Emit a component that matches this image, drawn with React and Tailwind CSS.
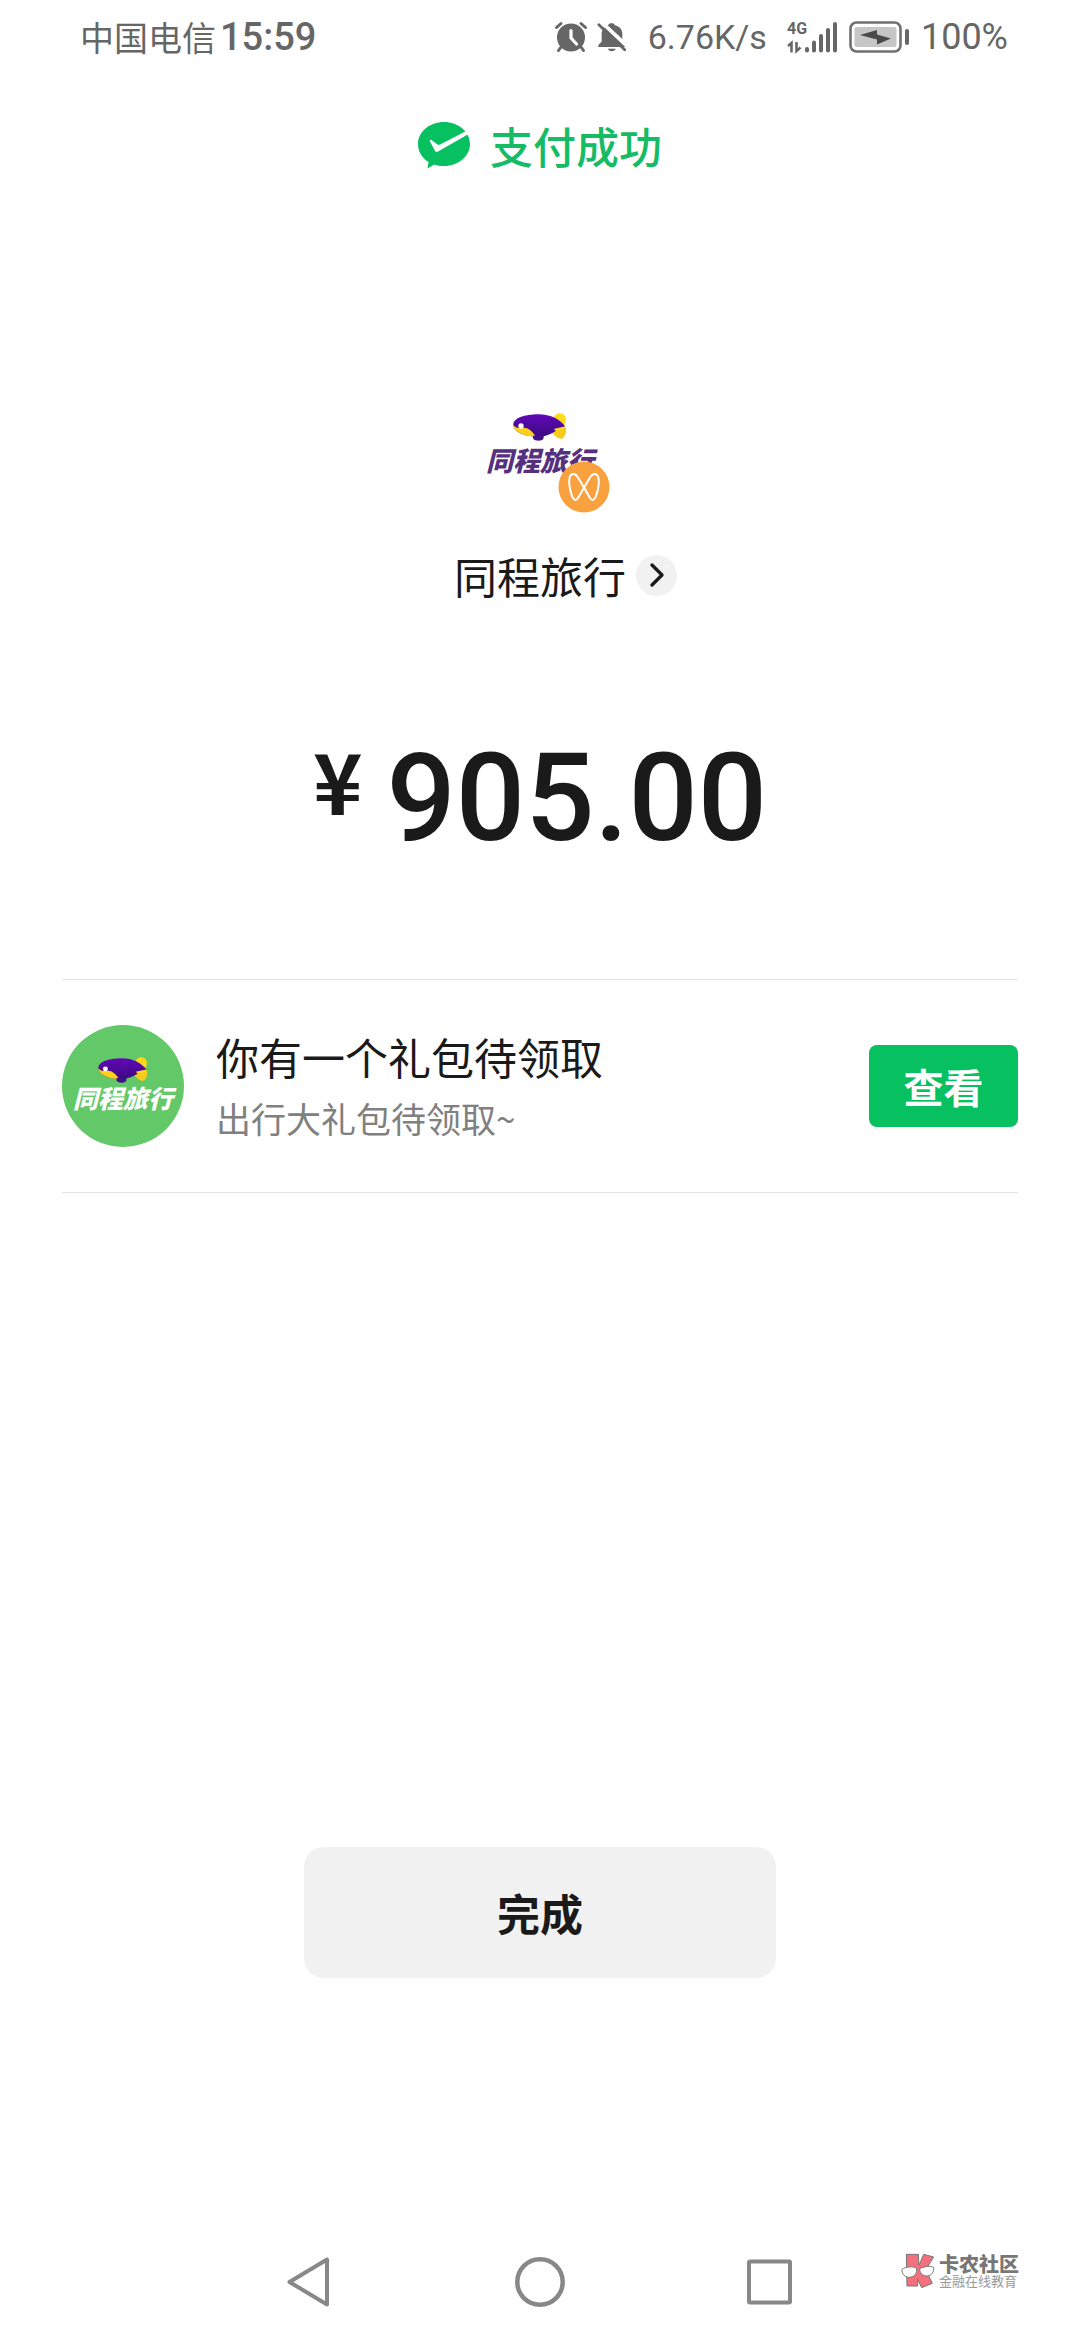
import React from 'react';
import { ChevronRight } from 'lucide-react';

function AlarmIcon() {
    return (
        <svg viewBox="0 0 34 34" className="w-[34px] h-[34px]" aria-hidden="true">
            <g stroke="#666" strokeWidth="3" strokeLinecap="round" fill="none">
                <path d="M2.5 7.5 L7 3.5 M31.500 7.500 L27 3.500" />
                <path d="M7 27 L4.500 30.500 M27 27 L29.500 30.500" />
            </g>
            <circle cx="17" cy="17.500" r="14" fill="#666" />
            <path d="M17 10.500 V18 L22.500 24" stroke="#fff" strokeWidth="3.200" strokeLinecap="round" strokeLinejoin="round" fill="none" />
        </svg>
    );
}

function BellOffIcon() {
    return (
        <svg viewBox="0 0 34 34" className="w-8 h-8" aria-hidden="true">
            <path d="M2.500 27.500 V25.500 L6 22 V14 C6 9 9 5.500 13 4.500 C13.500 1.800 19.500 1.800 20 4.500 C25 5.500 28 9 28 14 V22 L31 27.500 Z" fill="#666" />
            <path d="M12.500 29.500 H21 C20 33 13.500 33 12.500 29.500 Z" fill="#666" />
            <path d="M5 .5 L34 27.500" stroke="#fff" strokeWidth="4" />
            <path d="M3 4 L30.500 30.500" stroke="#666" strokeWidth="3" strokeLinecap="round" />
        </svg>
    );
}

function SignalIcon() {
    return (
        <svg viewBox="0 0 50 32" className="w-[50px] h-8 overflow-visible" aria-hidden="true">
            <text x="0" y="13" fontFamily="Roboto, sans-serif" fontSize="16" fontWeight="700" fill="#666">4G</text>
            <g stroke="#666" strokeWidth="2.500" fill="none">
                <path d="M1 25 L4.500 22 V31.500" />
                <path d="M9.500 21 V30 L13.500 26.500" />
            </g>
            <g fill="#666">
                <rect x="18" y="26" width="4" height="5.500" rx="2" />
                <rect x="25" y="19.500" width="4" height="12" rx="2" />
                <rect x="32" y="13" width="4" height="18.500" rx="2" />
                <rect x="39" y="7" width="4" height="24.500" rx="2" />
                <rect x="46" y="1" width="4" height="30.500" rx="2" />
            </g>
        </svg>
    );
}

function BatteryIcon() {
    return (
        <svg viewBox="0 0 60 32" className="w-[60px] h-8" aria-hidden="true">
            <rect x="1.500" y="1.500" width="50" height="29" rx="6" fill="#fff" stroke="#707070" strokeWidth="2.600" />
            <rect x="5.500" y="6" width="42" height="20" rx="2" fill="#c6c6c6" />
            <path d="M11 14 L28 9 V13.500 L42 17.500 L28 23.500 V18.500 Z" fill="#4a4a4a" />
            <rect x="56" y="8" width="4" height="16" rx="2" fill="#666" />
        </svg>
    );
}

function PaidIcon() {
    return (
        <svg viewBox="0 0 52 47" className="w-[52px] h-[47px]" aria-hidden="true">
            <path
                d="M26 0 C40.500 0 52 9.800 52 22 C52 34.200 40.500 44 26 44 C22.500 44 19.200 43.400 16.200 42.400 L9.500 46.500 L10.500 40 C4 36 0 29.500 0 22 C0 9.800 11.500 0 26 0 Z"
                fill="#07c160"
            />
            <path d="M13.500 18 L19 22.200 C20 23 21 23 22.200 22.500 L49 8.500 L51.500 11.500 L20 29.500 C18.500 30.300 17.500 30 16.800 28.500 L12 19.500 C11.500 18.200 12.300 17.200 13.500 18 Z" fill="#fff" />
        </svg>
    );
}

// Airship mark of 同程旅行
function Airship({ className }) {
    return (
        <svg viewBox="0 0 162 84" className={className} aria-hidden="true">
            <defs>
                <linearGradient id="hull" x1="0" y1="0" x2="0" y2="1">
                    <stop offset="0" stopColor="#6208b8" />
                    <stop offset="1" stopColor="#3b0a80" />
                </linearGradient>
            </defs>
            <path d="M122 14 C126 1 141 -3 151 4 C161 11 160 26 152 38 L126 36 Z" fill="#ffd91c" />
            <path d="M118 46 L158 42 C162 55 158 70 147 77 C137 79 126 70 116 56 Z" fill="#f5cb1c" />
            <path d="M1 36 C0 16 34 4 76 4 C114 4 142 20 157 41 C144 43 132 52 118 60 C100 70 82 72 64 71 C26 68 2 54 1 36 Z" fill="url(#hull)" />
            <path d="M1 36 C8 44 16 46 28 45 C42 42 56 52 68 71 C26 69 2 54 1 36 Z" fill="#ffcf1a" />
            <circle cx="24" cy="39" r="8" fill="#fff" />
            <path d="M122 48 L157 40 L155 47 L130 55 Z" fill="#ffd91c" />
            <path d="M60 68 H92 V75 C90 82 82 83 76 83 C68 83 60 80 60 75 Z" fill="#43108a" />
        </svg>
    );
}

function VideoBadge() {
    return (
        <svg viewBox="0 0 52 52" className="absolute -right-2 bottom-0 w-[52px] h-[52px]" aria-hidden="true">
            <circle cx="26" cy="26" r="25.500" fill="#f9a03f" />
            <path
                d="M26 26.500 L20 16.500 C18 13 15 12 13 14 C10 17 11 27 14 35 C15.500 39.500 18 40 20 37 L32 16.500 C34 13 37 12 39 14 C42 17 41 27 38 35 C36.500 39.500 34 40 32 37 Z"
                fill="none"
                stroke="#fff"
                strokeWidth="2"
                strokeLinejoin="round"
            />
        </svg>
    );
}

function StatusBar() {
    return (
        <div className="flex h-[74px] items-center justify-between pl-20 pr-[72px] text-[#666]">
            <div className="flex items-center gap-1">
                <span className="text-[34px] leading-none">中国电信</span>
                <span className="font-[Roboto] text-[38px] leading-none font-medium">15:59</span>
            </div>
            <div className="flex items-center">
                <AlarmIcon />
                <span className="ml-2">
                    <BellOffIcon />
                </span>
                <span className="ml-5 font-[Roboto] text-[34px] leading-none">6.76K/s</span>
                <span className="ml-5">
                    <SignalIcon />
                </span>
                <span className="ml-3">
                    <BatteryIcon />
                </span>
                <span className="ml-3 font-[Roboto] text-[36px] leading-none">100%</span>
            </div>
        </div>
    );
}

function NavBar() {
    return (
        <nav className="flex h-[116px] items-center justify-center gap-[180px]">
            <button type="button" aria-label="返回">
                <svg viewBox="0 0 50 50" className="w-[50px] h-[50px]" fill="none" stroke="#888" strokeWidth="4" strokeLinejoin="round">
                    <path d="M42 2.500 V47.500 L4.500 25 Z" />
                </svg>
            </button>
            <button type="button" aria-label="主屏幕">
                <svg viewBox="0 0 50 50" className="w-[50px] h-[50px]" fill="none" stroke="#888" strokeWidth="4.500">
                    <circle cx="25" cy="25" r="22.700" />
                </svg>
            </button>
            <button type="button" aria-label="最近任务">
                <svg viewBox="0 0 50 50" className="w-[50px] h-[50px]" fill="none" stroke="#888" strokeWidth="4" strokeLinejoin="round">
                    <rect x="4" y="4.500" width="41" height="41" rx="1" />
                </svg>
            </button>
        </nav>
    );
}

function Watermark() {
    return (
        <div className="absolute right-[61px] bottom-[51px] flex items-center gap-1">
            <svg viewBox="0 0 102 106" className="w-[34px] h-[36px]" aria-hidden="true">
                <g fill="#f4707c" stroke="#777" strokeWidth="3" strokeLinejoin="round">
                    <path d="M16 3 L52 3 L54 36 L68 3 L98 11 L74 50 L94 90 L62 103 L50 78 L50 98 L18 98 Z" />
                </g>
                <g fill="#fff" stroke="#777" strokeWidth="3">
                    <path d="M3 48 C14 40 36 38 46 44 C50 60 40 72 24 72 C10 72 2 60 3 48 Z" />
                    <path d="M56 46 C68 40 88 36 98 42 C100 54 92 68 78 68 C64 68 56 58 56 46 Z" />
                </g>
            </svg>
            <div className="flex flex-col">
                <span className="text-[20px] leading-5 font-black text-[#777]">卡农社区</span>
                <span className="text-[13px] leading-[14px] text-[#999]">金融在线教育</span>
            </div>
        </div>
    );
}

export default function App() {
    return (
        <div className="relative flex min-h-screen flex-col bg-white font-['Noto_Sans_CJK_SC',sans-serif] text-[#1a1a1a]">
            <StatusBar />

            <header className="mt-[41px] flex h-[60px] items-center justify-center gap-5 text-[#15bc65]">
                <PaidIcon />
                <h1 className="text-[43px] leading-none font-medium">支付成功</h1>
            </header>

            <main className="flex flex-1 flex-col">
                <div className="relative mt-[214px] flex h-[124px] w-[124px] flex-col items-center self-center pt-6">
                    <Airship className="w-[54px] h-7" />
                    <span className="mt-1 text-[27px] leading-[30px] font-black whitespace-nowrap text-[#54307f] italic">同程旅行</span>
                    <VideoBadge />
                </div>

                <a href="#merchant" className="mt-8 flex h-[60px] items-center justify-center gap-[10px]">
                    <span className="w-[41px]" />
                    <span className="text-[43px] leading-none">同程旅行</span>
                    <span className="flex h-[41px] w-[41px] items-center justify-center rounded-full bg-[#f1f1f1]">
                        <ChevronRight className="w-10 h-10" strokeWidth={2} />
                    </span>
                </a>

                <div className="mt-[132px] flex h-[124px] items-start justify-center gap-6">
                    <span className="text-[84px] leading-none font-bold">¥</span>
                    <span className="font-[Roboto] text-[122px] leading-[124px] font-medium">905.00</span>
                </div>

                <section className="mx-[62px] mt-[118px] flex items-center border-y border-[#e3e3e3] py-11">
                    <div className="flex h-[122px] w-[122px] flex-col items-center rounded-full bg-[#63c868] pt-8">
                        <Airship className="w-[50px] h-[26px]" />
                        <span className="text-[25px] leading-7 font-black whitespace-nowrap text-white italic">同程旅行</span>
                    </div>
                    <div className="ml-8 flex flex-1 flex-col">
                        <h2 className="text-[43px] leading-[64px]">你有一个礼包待领取</h2>
                        <p className="text-[35px] leading-[60px] text-[#808080]">出行大礼包待领取~</p>
                    </div>
                    <button type="button" className="h-[82px] w-[149px] rounded-lg bg-[#07c160] text-[40px] leading-none font-bold text-white">
                        查看
                    </button>
                </section>

                <button
                    type="button"
                    className="mt-auto mb-[246px] h-[131px] w-[472px] self-center rounded-[20px] bg-[#f1f1f1] text-[43px] leading-none font-bold"
                >
                    完成
                </button>
            </main>

            <NavBar />
            <Watermark />
        </div>
    );
}
